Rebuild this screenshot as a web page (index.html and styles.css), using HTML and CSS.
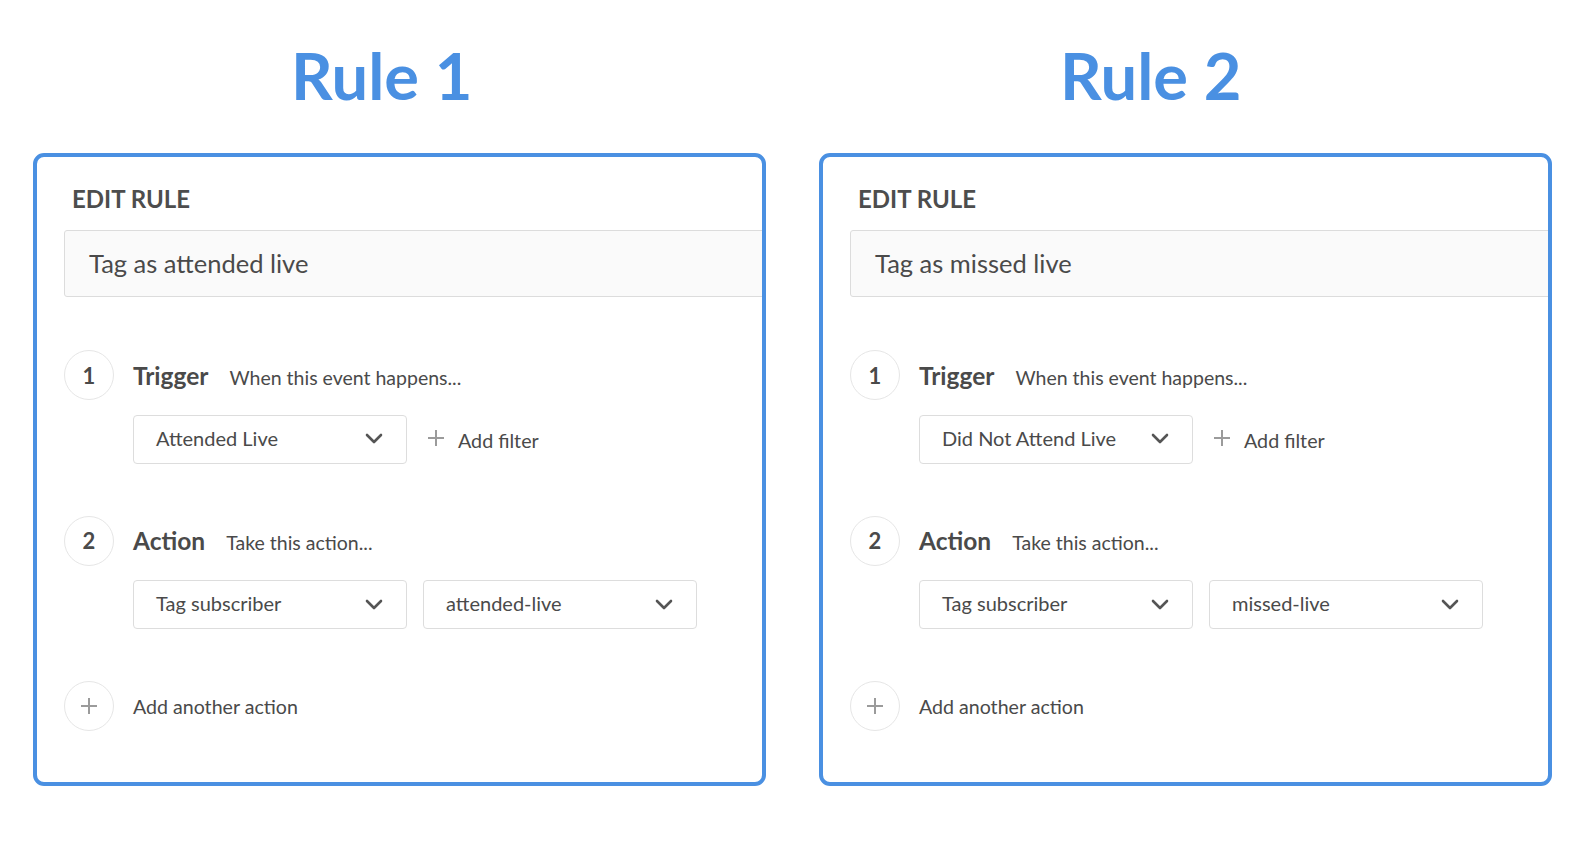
FILE: index.html
```html
<!DOCTYPE html>
<html lang="en">
<head>
<meta charset="utf-8">
<title>Rules</title>
<link rel="stylesheet" href="styles.css">
</head>
<body>
<div class="page">
  <section class="rule rule-1">
    <h1 class="rule-title">Rule 1</h1>
    <div class="card">
      <h2 class="card-heading">EDIT RULE</h2>
      <div class="name-input">Tag as attended live</div>
      <div class="step">
        <div class="step-head">
          <span class="step-num">1</span>
          <span class="step-label"><span class="step-title">Trigger</span><span class="step-hint">When this event happens...</span></span>
        </div>
        <div class="step-body">
          <div class="select"><span>Attended Live</span><svg class="chev" width="18" height="11" viewBox="0 0 18 11"><path d="M2 2 L9 9 L16 2" fill="none" stroke="#555" stroke-width="2.6" stroke-linecap="round" stroke-linejoin="round"/></svg></div>
          <div class="add-filter"><svg class="plus" width="18" height="18" viewBox="0 0 18 18"><path d="M9 1 V17 M1 9 H17" stroke="#9b9b9b" stroke-width="2"/></svg><span>Add filter</span></div>
        </div>
      </div>
      <div class="step">
        <div class="step-head">
          <span class="step-num">2</span>
          <span class="step-label"><span class="step-title">Action</span><span class="step-hint">Take this action...</span></span>
        </div>
        <div class="step-body">
          <div class="select"><span>Tag subscriber</span><svg class="chev" width="18" height="11" viewBox="0 0 18 11"><path d="M2 2 L9 9 L16 2" fill="none" stroke="#555" stroke-width="2.6" stroke-linecap="round" stroke-linejoin="round"/></svg></div>
          <div class="select"><span>attended-live</span><svg class="chev" width="18" height="11" viewBox="0 0 18 11"><path d="M2 2 L9 9 L16 2" fill="none" stroke="#555" stroke-width="2.6" stroke-linecap="round" stroke-linejoin="round"/></svg></div>
        </div>
      </div>
      <div class="add-action">
        <span class="step-num add-circle"><svg width="18" height="18" viewBox="0 0 18 18"><path d="M9 1 V17 M1 9 H17" stroke="#9b9b9b" stroke-width="2"/></svg></span>
        <span class="add-action-text">Add another action</span>
      </div>
    </div>
  </section>

  <section class="rule rule-2">
    <h1 class="rule-title">Rule 2</h1>
    <div class="card">
      <h2 class="card-heading">EDIT RULE</h2>
      <div class="name-input">Tag as missed live</div>
      <div class="step">
        <div class="step-head">
          <span class="step-num">1</span>
          <span class="step-label"><span class="step-title">Trigger</span><span class="step-hint">When this event happens...</span></span>
        </div>
        <div class="step-body">
          <div class="select"><span>Did Not Attend Live</span><svg class="chev" width="18" height="11" viewBox="0 0 18 11"><path d="M2 2 L9 9 L16 2" fill="none" stroke="#555" stroke-width="2.6" stroke-linecap="round" stroke-linejoin="round"/></svg></div>
          <div class="add-filter"><svg class="plus" width="18" height="18" viewBox="0 0 18 18"><path d="M9 1 V17 M1 9 H17" stroke="#9b9b9b" stroke-width="2"/></svg><span>Add filter</span></div>
        </div>
      </div>
      <div class="step">
        <div class="step-head">
          <span class="step-num">2</span>
          <span class="step-label"><span class="step-title">Action</span><span class="step-hint">Take this action...</span></span>
        </div>
        <div class="step-body">
          <div class="select"><span>Tag subscriber</span><svg class="chev" width="18" height="11" viewBox="0 0 18 11"><path d="M2 2 L9 9 L16 2" fill="none" stroke="#555" stroke-width="2.6" stroke-linecap="round" stroke-linejoin="round"/></svg></div>
          <div class="select"><span>missed-live</span><svg class="chev" width="18" height="11" viewBox="0 0 18 11"><path d="M2 2 L9 9 L16 2" fill="none" stroke="#555" stroke-width="2.6" stroke-linecap="round" stroke-linejoin="round"/></svg></div>
        </div>
      </div>
      <div class="add-action">
        <span class="step-num add-circle"><svg width="18" height="18" viewBox="0 0 18 18"><path d="M9 1 V17 M1 9 H17" stroke="#9b9b9b" stroke-width="2"/></svg></span>
        <span class="add-action-text">Add another action</span>
      </div>
    </div>
  </section>
</div>
</body>
</html>
```

FILE: styles.css
```css
* { box-sizing: border-box; }

html, body {
  margin: 0;
  padding: 0;
  background: #ffffff;
}

body {
  font-family: Lato, "Open Sans", "Liberation Sans", sans-serif;
  color: #4a4a4a;
}

.page {
  display: flex;
  gap: 53px;
  padding: 35px 0 0 33px;
}

.rule {
  width: 733px;
  display: flex;
  flex-direction: column;
}

.rule-title {
  margin: 0 0 38px 0;
  font-size: 65px;
  line-height: 80px;
  font-weight: 700;
  color: #4a90e2;
  height: 80px;
}

.rule-1 .rule-title { padding-left: 258px; }
.rule-2 .rule-title { padding-left: 241px; }

.card {
  height: 633px;
  border: 4px solid #4a90e2;
  border-radius: 11px;
  overflow: hidden;
  padding: 29px 0 0 27px;
}

.card-heading {
  margin: 0 0 19px 8px;
  font-size: 24px;
  line-height: 25px;
  font-weight: 700;
  color: #4d4d4d;
}

.name-input {
  height: 67px;
  margin-right: -60px;
  border: 1px solid #dcdcdc;
  border-radius: 3px;
  background: #fafafa;
  padding-left: 24px;
  font-size: 25.5px;
  line-height: 65px;
  color: #4a4a4a;
}

.step {
  margin-top: 53px;
  display: flex;
  flex-direction: column;
}

.step + .step { margin-top: 52px; }

.step-head {
  display: flex;
  align-items: center;
  height: 50px;
}

.step-num {
  width: 50px;
  height: 50px;
  flex: none;
  border: 1.5px solid #e6e6e6;
  border-radius: 50%;
  display: flex;
  align-items: center;
  justify-content: center;
  font-size: 22px;
  font-weight: 700;
  color: #4a4a4a;
}

.step-label {
  display: flex;
  align-items: baseline;
  gap: 21px;
  margin-left: 19px;
}

.step-title {
  font-size: 24.5px;
  font-weight: 700;
  color: #4a4a4a;
}

.step-hint {
  font-size: 19.5px;
  color: #4a4a4a;
}

.step-body {
  display: flex;
  align-items: center;
  gap: 16px;
  margin-top: 14.5px;
  margin-left: 69px;
}

.select {
  width: 274px;
  height: 49px;
  border: 1px solid #dddddd;
  border-radius: 4px;
  background: #ffffff;
  display: flex;
  align-items: center;
  justify-content: space-between;
  padding: 0 23px 3px 22px;
  font-size: 20px;
  color: #4a4a4a;
}

.chev { display: block; margin-top: 2px; }

.add-filter {
  display: flex;
  align-items: center;
  gap: 13px;
  margin-left: 4px;
  font-size: 19.7px;
  color: #4a4a4a;
  padding-top: 2px;
}

.plus { display: block; margin-top: -4px; }

.add-action {
  margin-top: 52px;
  display: flex;
  align-items: center;
}

.add-circle svg { display: block; }

.add-action-text {
  margin-left: 19px;
  font-size: 19.6px;
  color: #4a4a4a;
}
```
